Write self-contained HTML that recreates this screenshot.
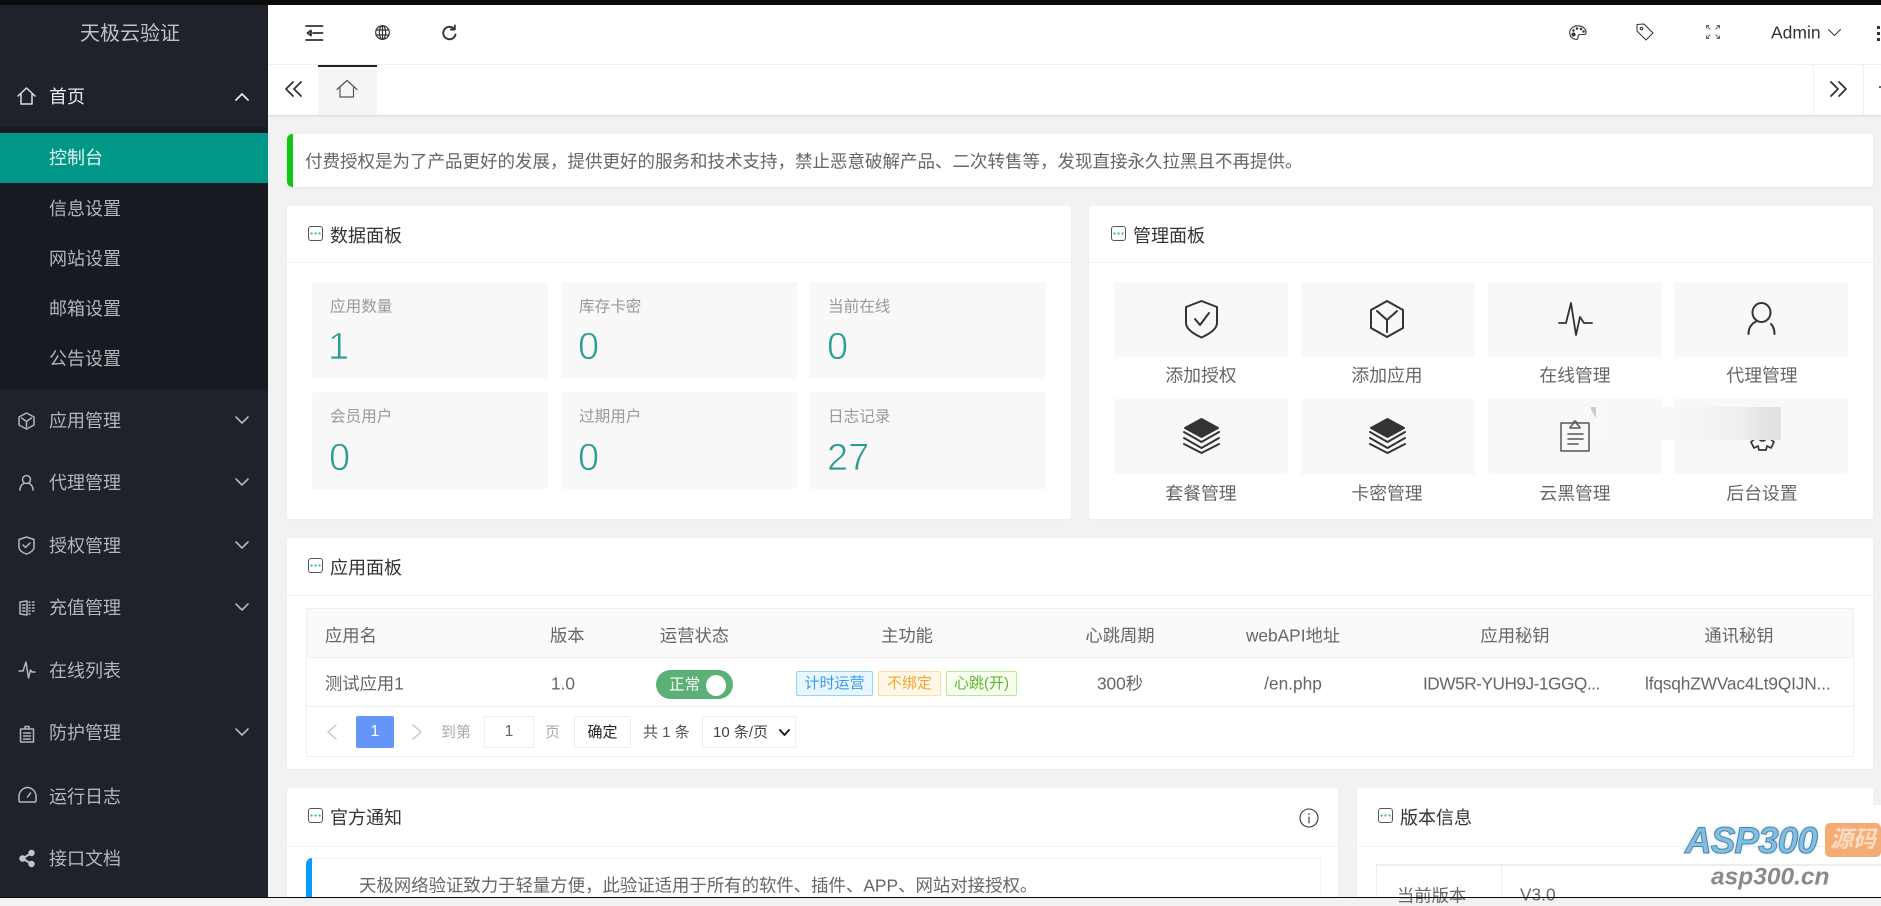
<!DOCTYPE html>
<html lang="zh"><head><meta charset="utf-8"><title>天极云验证</title>
<style>
html,body{margin:0;padding:0;width:1881px;height:898px;overflow:hidden;background:#f2f2f2;font-family:"Liberation Sans","Noto Sans CJK SC",sans-serif;}
div,span,svg{position:absolute;box-sizing:border-box}
.t{white-space:nowrap;transform:translateY(calc(-50% + var(--s,0px)));line-height:1.2}
.c{white-space:nowrap;transform:translate(-50%,calc(-50% + var(--s,0px)));line-height:1.2}
.card{background:#fff;border-radius:3px;box-shadow:0 1px 2px rgba(0,0,0,.04)}
.side{color:#b4b6ba;font-size:18px;left:49px;--s:2px}
.hl{height:1px;background:#f3f3f3}
.ttl{font-size:18px;color:#333;--s:2px}
.box{background:#f8f8f8;border-radius:2px}
.lab{font-size:15.6px;color:#999;--s:3px}
.val{font-size:38px;color:#2a9d90;-webkit-text-stroke:.8px #f8f8f8}
.tile{background:#f8f8f8;border-radius:2px;width:174px;height:75px}
.tl{font-size:17.8px;color:#666;--s:1px}
.th{font-size:17.3px;color:#666;--s:1px}
svg{fill:none;stroke:#333;stroke-width:1.5;stroke-linecap:round;stroke-linejoin:round;overflow:visible}
.ic{stroke:#b4b6ba}
.badge{top:671px;height:25px;border-radius:2px;border:1px solid;font-size:15px;text-align:center;line-height:23px;white-space:nowrap}
</style></head><body>

<!-- sidebar -->
<div style="left:0;top:0;width:268px;height:898px;background:#1f222b"></div>
<div style="left:0;top:127px;width:268px;height:263px;background:#181a21"></div>
<div style="left:0;top:133px;width:268px;height:50px;background:#009688"></div>
<div class="c" style="left:130px;top:33px;font-size:20px;color:#c2c2c2;--s:1px">天极云验证</div>
<div class="t side" style="top:96px;color:#e8e8e8">首页</div>
<div class="t side" style="top:157px;color:#e8f5f3">控制台</div>
<div class="t side" style="top:208px">信息设置</div>
<div class="t side" style="top:258px">网站设置</div>
<div class="t side" style="top:308px">邮箱设置</div>
<div class="t side" style="top:358px">公告设置</div>
<div class="t side" style="top:420px">应用管理</div>
<div class="t side" style="top:482px">代理管理</div>
<div class="t side" style="top:544.500px">授权管理</div>
<div class="t side" style="top:606.500px">充值管理</div>
<div class="t side" style="top:670px">在线列表</div>
<div class="t side" style="top:731.500px">防护管理</div>
<div class="t side" style="top:796px">运行日志</div>
<div class="t side" style="top:857.500px">接口文档</div>
<!-- side icons -->
<svg class="ic" style="left:17px;top:87px;stroke:#e0e0e0" width="19" height="18" viewBox="0 0 19 18"><path d="M1 9L9.5 1 18 9M4 7.5V17H15V7.5"/></svg>
<svg class="ic" style="left:18px;top:412px" width="17" height="18" viewBox="0 0 17 18"><path d="M8.500 1L16 5V13L8.500 17 1 13V5ZM3.500 6L8.500 9.500 13.500 6M8.500 9.500V15"/></svg>
<svg class="ic" style="left:19px;top:474px" width="15" height="17" viewBox="0 0 15 17"><circle cx="7.500" cy="5.500" r="4"/><path d="M1 16C1 12 3 10.500 4.500 9.500M14 16C14 12 12 10.500 10.500 9.500"/></svg>
<svg class="ic" style="left:18px;top:536px" width="17" height="19" viewBox="0 0 17 19"><path d="M8.500 1L16 3.500V11C16 14.500 12 17 8.500 18 5 17 1 14.500 1 11V3.500ZM5 9L7.500 11.500 12 7"/></svg>
<svg class="ic" style="left:19px;top:600px" width="16" height="16" viewBox="0 0 16 16"><path d="M1 2L8 1V15L1 14ZM3.500 5H6M3.500 8H6M3.500 11H6M10 2H11M10 5H11M10 8H11M10 11H11M10 14H11M13.500 2H15M13.500 5H15M13.500 8H15M13.500 11H15"/></svg>
<svg class="ic" style="left:18px;top:660px" width="18" height="20" viewBox="0 0 18 20"><path d="M1 11H5L8 2 10.500 18 12.500 10 14 12H17"/></svg>
<svg class="ic" style="left:19px;top:725px" width="16" height="18" viewBox="0 0 16 18"><path d="M1.500 4H14.500V17H1.500ZM6 4V1.500H10V4M4.500 8H11.500M4.500 11H11.500M4.500 14H11.500"/></svg>
<svg class="ic" style="left:18px;top:786px" width="19" height="17" viewBox="0 0 19 17"><path d="M1.500 16C.5 14 1 12 1 10.500 1 5.500 5 1.500 9.500 1.500S18 5.500 18 10.500C18 12 18.500 14 17.500 16ZM12.500 7L9.500 11"/></svg>
<svg style="left:19px;top:850px;stroke:#c4c4c4;fill:#c4c4c4" width="16" height="17" viewBox="0 0 16 17"><circle cx="3.500" cy="8.500" r="2.500"/><circle cx="12.500" cy="3" r="2.500"/><circle cx="12.500" cy="14" r="2.500"/><path d="M3.500 8.500L12.500 3M3.500 8.500L12.500 14" stroke-width="2"/></svg>
<!-- chevrons -->
<svg style="left:235px;top:93px;stroke:#e8e8e8;stroke-width:1.800" width="14" height="8" viewBox="0 0 14 8"><path d="M1 7L7 1 13 7"/></svg>
<svg class="ic" style="left:235px;top:416px;stroke-width:1.600" width="14" height="8" viewBox="0 0 14 8"><path d="M1 1L7 7 13 1"/></svg>
<svg class="ic" style="left:235px;top:478px;stroke-width:1.600" width="14" height="8" viewBox="0 0 14 8"><path d="M1 1L7 7 13 1"/></svg>
<svg class="ic" style="left:235px;top:541px;stroke-width:1.600" width="14" height="8" viewBox="0 0 14 8"><path d="M1 1L7 7 13 1"/></svg>
<svg class="ic" style="left:235px;top:603px;stroke-width:1.600" width="14" height="8" viewBox="0 0 14 8"><path d="M1 1L7 7 13 1"/></svg>
<svg class="ic" style="left:235px;top:728px;stroke-width:1.600" width="14" height="8" viewBox="0 0 14 8"><path d="M1 1L7 7 13 1"/></svg>

<!-- header -->
<div style="left:268px;top:5px;width:1613px;height:60px;background:#fff;border-bottom:1px solid #f1f1f1"></div>
<svg style="left:306px;top:25px;stroke-width:1.800" width="17" height="16" viewBox="0 0 17 16"><path d="M0 1H16.500M0 15H16.500M7 8H16.500M5 5.500L1.500 8 5 10.500Z"/></svg>
<svg style="left:375px;top:25px;stroke-width:1.200" width="15" height="15" viewBox="0 0 15 15"><circle cx="7.500" cy="7.500" r="6.800"/><ellipse cx="7.500" cy="7.500" rx="3.200" ry="6.800"/><path d="M1 5H14M1 10H14M7.500 .7V14.300"/></svg>
<svg style="left:442px;top:25px;stroke-width:1.900" width="15" height="16" viewBox="0 0 15 16"><path d="M13.500 9.500A6.200 6.200 0 1 1 12 3.800M12.800 .5V4.500H8.800"/></svg>
<!-- tabs -->
<div style="left:268px;top:65px;width:1613px;height:50px;background:#fff;box-shadow:0 1px 2px rgba(0,0,0,.12)"></div>
<div style="left:318px;top:65px;width:59px;height:50px;background:#f5f5f5;border-top:2px solid #1f222b"></div>
<svg style="left:285px;top:81px;stroke-width:1.800" width="17" height="16" viewBox="0 0 17 16"><path d="M8 1L1 8 8 15M16 1L9 8 16 15"/></svg>
<svg style="left:337px;top:80px;stroke:#555;stroke-width:1.200" width="20" height="18" viewBox="0 0 20 18"><path d="M0 9.500L10 .5 20 9.500M3 7.500V17H16.500V7.500"/></svg>
<div style="left:1813px;top:65px;width:1px;height:50px;background:#f1f1f1"></div>
<div style="left:1863px;top:65px;width:1px;height:50px;background:#f1f1f1"></div>
<svg style="left:1830px;top:81px;stroke-width:1.800" width="17" height="16" viewBox="0 0 17 16"><path d="M1 1L8 8 1 15M9 1L16 8 9 15"/></svg>
<div style="left:1879px;top:86px;width:2px;height:1.500px;background:#666"></div>
<!-- right header icons -->
<svg style="left:1569px;top:25px;stroke-width:1.100" width="18" height="15" viewBox="0 0 18 15"><path d="M9 .8C4 .8 .7 4 .7 7.800S3.500 14.300 7.500 14.300C9.500 14.300 9 12.500 9 11.500 9 10 10.500 9.500 12 9.500H15C17 9.500 17.300 8 17 6.500 16 3 13 .8 9 .8Z"/><circle cx="4.500" cy="9.500" r="1.500" fill="#333"/><circle cx="4.500" cy="5.500" r=".7" fill="#333"/><circle cx="8" cy="3.500" r=".7" fill="#333"/><circle cx="12" cy="4" r=".7" fill="#333"/><circle cx="14.500" cy="6.500" r=".7" fill="#333"/></svg>
<svg style="left:1636px;top:23px;stroke-width:1" width="18" height="18" viewBox="0 0 18 18"><path d="M1 1.500L8 1 17 10 10 17 1 8Z"/><circle cx="5.500" cy="5.500" r="1.300"/></svg>
<svg style="left:1706px;top:25px;stroke-width:.9;stroke:#555" width="14" height="14" viewBox="0 0 14 14"><path d="M.5 3V.5H3M.5 .5L4 4M13.500 3V.5H11M13.500 .5L10 4M.5 11V13.500H3M.5 13.500L4 10M13.500 11V13.500H11M13.500 13.500L10 10"/></svg>
<div class="t" style="left:1771px;top:33px;font-size:17.500px;color:#333">Admin</div>
<svg style="left:1828px;top:29px;stroke-width:1" width="13" height="7" viewBox="0 0 13 7"><path d="M.5 .5L6.500 6.500 12.500 .5"/></svg>
<div style="left:1877px;top:26px;width:3px;height:3px;background:#333"></div>
<div style="left:1877px;top:32px;width:3px;height:3px;background:#333"></div>
<div style="left:1877px;top:38px;width:3px;height:3px;background:#333"></div>

<!-- notice -->
<div class="card" style="left:287px;top:134px;width:1586px;height:53px;box-shadow:0 1px 3px rgba(0,0,0,.07)"></div>
<div style="left:287px;top:134px;width:6px;height:53px;background:#10c610;border-radius:5px 0 0 5px"></div>
<div class="t" style="left:305px;top:161px;font-size:17.500px;color:#666;--s:1px">付费授权是为了产品更好的发展，提供更好的服务和技术支持，禁止恶意破解产品、二次转售等，发现直接永久拉黑且不再提供。</div>

<!-- data panel -->
<div class="card" style="left:287px;top:206px;width:784px;height:313px"></div>
<div class="hl" style="left:287px;top:262px;width:784px"></div>
<svg style="left:308px;top:226px;stroke-width:1" width="15" height="15" viewBox="0 0 15 15"><rect x=".5" y=".5" width="14" height="14" rx="2.500" stroke="#555"/><path d="M3.500 7.500H3.600M7.500 7.500H7.600M11.500 7.500H11.600" stroke="#3bb8b0" stroke-width="2.200"/></svg>
<div class="t ttl" style="left:330px;top:235px">数据面板</div>
<div class="box" style="left:312px;top:282px;width:236px;height:97px"></div>
<div class="box" style="left:561px;top:282px;width:236px;height:97px"></div>
<div class="box" style="left:809px;top:282px;width:237px;height:97px"></div>
<div class="box" style="left:312px;top:392px;width:236px;height:97px"></div>
<div class="box" style="left:561px;top:392px;width:236px;height:97px"></div>
<div class="box" style="left:809px;top:392px;width:237px;height:97px"></div>
<div class="t lab" style="left:330px;top:304.500px">应用数量</div>
<div class="t lab" style="left:579px;top:304.500px">库存卡密</div>
<div class="t lab" style="left:828px;top:304.500px">当前在线</div>
<div class="t lab" style="left:330px;top:414.500px">会员用户</div>
<div class="t lab" style="left:579px;top:414.500px">过期用户</div>
<div class="t lab" style="left:828px;top:414.500px">日志记录</div>
<div class="t val" style="left:328px;top:348px">1</div>
<div class="t val" style="left:578px;top:348px">0</div>
<div class="t val" style="left:827px;top:348px">0</div>
<div class="t val" style="left:329px;top:458.500px">0</div>
<div class="t val" style="left:578px;top:458.500px">0</div>
<div class="t val" style="left:827px;top:458.500px">27</div>

<!-- manage panel -->
<div class="card" style="left:1089px;top:206px;width:784px;height:313px"></div>
<div class="hl" style="left:1089px;top:262px;width:784px"></div>
<svg style="left:1111px;top:226px;stroke-width:1" width="15" height="15" viewBox="0 0 15 15"><rect x=".5" y=".5" width="14" height="14" rx="2.500" stroke="#555"/><path d="M3.500 7.500H3.600M7.500 7.500H7.600M11.500 7.500H11.600" stroke="#3bb8b0" stroke-width="2.200"/></svg>
<div class="t ttl" style="left:1133px;top:235px">管理面板</div>
<div class="tile" style="left:1114px;top:282px"></div>
<div class="tile" style="left:1301px;top:282px"></div>
<div class="tile" style="left:1488px;top:282px"></div>
<div class="tile" style="left:1674px;top:282px"></div>
<div class="tile" style="left:1114px;top:399px"></div>
<div class="tile" style="left:1301px;top:399px"></div>
<div class="tile" style="left:1488px;top:399px"></div>
<div class="tile" style="left:1674px;top:399px"></div>
<div class="c tl" style="left:1201px;top:375px">添加授权</div>
<div class="c tl" style="left:1387px;top:375px">添加应用</div>
<div class="c tl" style="left:1575px;top:375px">在线管理</div>
<div class="c tl" style="left:1762px;top:375px">代理管理</div>
<div class="c tl" style="left:1201px;top:493px">套餐管理</div>
<div class="c tl" style="left:1387px;top:493px">卡密管理</div>
<div class="c tl" style="left:1575px;top:493px">云黑管理</div>
<div class="c tl" style="left:1762px;top:493px">后台设置</div>
<svg style="left:1185px;top:300px;stroke-width:2" width="33" height="38" viewBox="0 0 33 38"><path d="M16.500 1L32 7V23C32 30 22 35 16.500 37.500 11 35 1 30 1 23V7ZM10 19L15 25 24 13"/></svg>
<svg style="left:1370px;top:300px;stroke-width:2" width="34" height="38" viewBox="0 0 34 38"><path d="M17 1L33 10V28L17 37 1 28V10ZM7 11L17 20 27 11M17 20V32"/></svg>
<svg style="left:1558px;top:302px;stroke-width:1.800" width="35" height="34" viewBox="0 0 35 34"><path d="M1 21H8L13 1 18 33 22 15 26 21H34"/></svg>
<svg style="left:1747px;top:302px;stroke-width:2" width="29" height="33" viewBox="0 0 29 33"><ellipse cx="14.500" cy="10.500" rx="9" ry="9.500"/><path d="M1.500 32C1.500 26 4 22 9 19.500M27.500 32C27.500 28 26.500 24.500 24 22"/></svg>
<svg style="left:1183px;top:418px;stroke-width:2" width="37" height="36" viewBox="0 0 37 36"><path d="M18.500 1L35 10 18.500 19 2 10Z" fill="#333"/><path d="M1 14L18.500 24 36 14M1 20L18.500 30 36 20M1 26L18.500 35 36 26"/></svg>
<svg style="left:1369px;top:418px;stroke-width:2" width="37" height="36" viewBox="0 0 37 36"><path d="M18.500 1L35 10 18.500 19 2 10Z" fill="#333"/><path d="M1 14L18.500 24 36 14M1 20L18.500 30 36 20M1 26L18.500 35 36 26"/></svg>
<svg style="left:1560px;top:419px;stroke-width:1.500;stroke:#555" width="30" height="33" viewBox="0 0 30 33"><path d="M1 4H29V32H1ZM10 9C10 7 12 7 13 5 14 1 16 1 17 5 18 7 20 7 20 9ZM8 15H23M8 20H23M8 25H18"/></svg>
<svg style="left:1750px;top:421px;stroke-width:1.700" width="25" height="31" viewBox="0 0 25 31"><path d="M9 2H16L17 7 21 5 24 11 20.500 14 20.500 18 24 21 21 27 17 25 16 29H9L8 25 4 27 1 21 4.500 18 4.500 14 1 11 4 5 8 7Z"/><circle cx="12.500" cy="16" r="4"/></svg>
<!-- blurred patch -->
<div style="left:1596px;top:407px;width:185px;height:33px;background:linear-gradient(90deg,#f9f9f9 0%,#f5f5f5 50%,#efefef 78%,#e6e6e6 88%,#e0e0e0 100%)"></div>
<div style="left:1591px;top:407px;width:5px;height:14px;background:linear-gradient(60deg,#f8f8f8 50%,#ccc 50%)"></div>

<!-- app panel -->
<div class="card" style="left:287px;top:538px;width:1586px;height:231px"></div>
<div class="hl" style="left:287px;top:595px;width:1586px"></div>
<svg style="left:308px;top:558px;stroke-width:1" width="15" height="15" viewBox="0 0 15 15"><rect x=".5" y=".5" width="14" height="14" rx="2.500" stroke="#555"/><path d="M3.500 7.500H3.600M7.500 7.500H7.600M11.500 7.500H11.600" stroke="#3bb8b0" stroke-width="2.200"/></svg>
<div class="t ttl" style="left:330px;top:567px">应用面板</div>
<div style="left:306px;top:608px;width:1548px;height:149px;border:1px solid #eee"></div>
<div style="left:307px;top:609px;width:1546px;height:48px;background:#fafafa"></div>
<div class="hl" style="left:307px;top:657px;width:1546px;background:#eee"></div>
<div class="hl" style="left:307px;top:706px;width:1546px;background:#eee"></div>
<div class="t th" style="left:325px;top:635px">应用名</div>
<div class="t th" style="left:550px;top:635px">版本</div>
<div class="c th" style="left:694.500px;top:635px">运营状态</div>
<div class="c th" style="left:907px;top:635px">主功能</div>
<div class="c th" style="left:1120px;top:635px">心跳周期</div>
<div class="c th" style="left:1293px;top:635px">webAPI地址</div>
<div class="c th" style="left:1515px;top:635px">应用秘钥</div>
<div class="c th" style="left:1739px;top:635px">通讯秘钥</div>
<div class="t th" style="left:325px;top:683px">测试应用1</div>
<div class="t th" style="left:551px;top:683px">1.0</div>
<div style="left:656px;top:670px;width:77px;height:29px;border-radius:15px;background:#5bb075"></div>
<div class="t" style="left:669px;top:686px;font-size:15.600px;color:#fff">正常</div>
<div style="left:706px;top:674.500px;width:20px;height:21px;border-radius:50%;background:#fff"></div>
<div class="badge" style="left:796px;width:77px;background:#e8f7ff;border-color:#91d5ff;color:#3a9ae8">计时运营</div>
<div class="badge" style="left:878px;width:63px;background:#fff8e8;border-color:#ffe09a;color:#f2a62e">不绑定</div>
<div class="badge" style="left:946px;width:71px;background:#f6ffed;border-color:#b7eb8f;color:#62b438">心跳(开)</div>
<div class="c th" style="left:1120px;top:683px">300秒</div>
<div class="c th" style="left:1293px;top:683px">/en.php</div>
<div class="t th" style="left:1423px;top:683px;letter-spacing:-.5px">IDW5R-YUH9J-1GGQ...</div>
<div class="t th" style="left:1645px;top:683px;letter-spacing:-.15px">lfqsqhZWVac4Lt9QIJN...</div>
<svg style="left:327px;top:724px;stroke:#ccc;stroke-width:1.500" width="10" height="16" viewBox="0 0 10 16"><path d="M9 1L1 8 9 15"/></svg>
<div style="left:356px;top:716px;width:38px;height:32px;background:#6496fa;border-radius:2px;color:#fff;font-size:15.600px;text-align:center;line-height:32px">1</div>
<svg style="left:412px;top:724px;stroke:#ccc;stroke-width:1.500" width="10" height="16" viewBox="0 0 10 16"><path d="M1 1L9 8 1 15"/></svg>
<div class="t" style="left:441px;top:733px;font-size:15px;color:#aaa">到第</div>
<div style="left:484px;top:716px;width:50px;height:32px;border:1px solid #eee;color:#666;font-size:15.600px;text-align:center;line-height:30px">1</div>
<div class="t" style="left:545px;top:733px;font-size:15px;color:#aaa">页</div>
<div style="left:574px;top:716px;width:57px;height:32px;border:1px solid #eee;color:#222;font-size:15px;text-align:center;line-height:31px">确定</div>
<div class="t" style="left:643px;top:733px;font-size:15px;color:#555">共 1 条</div>
<div style="left:702px;top:716px;width:94px;height:32px;border:1px solid #eee"></div>
<div class="t" style="left:713px;top:733px;font-size:15px;color:#444">10 条/页</div>
<svg style="left:779px;top:729px;stroke:#222;stroke-width:2" width="11" height="7" viewBox="0 0 11 7"><path d="M1 1L5.500 6 10 1"/></svg>

<!-- notice panel -->
<div class="card" style="left:287px;top:788px;width:1051px;height:110px"></div>
<div class="hl" style="left:287px;top:846px;width:1051px"></div>
<svg style="left:308px;top:808px;stroke-width:1" width="15" height="15" viewBox="0 0 15 15"><rect x=".5" y=".5" width="14" height="14" rx="2.500" stroke="#555"/><path d="M3.500 7.500H3.600M7.500 7.500H7.600M11.500 7.500H11.600" stroke="#3bb8b0" stroke-width="2.200"/></svg>
<div class="t ttl" style="left:330px;top:817px">官方通知</div>
<svg style="left:1299px;top:808px;stroke-width:1.100" width="20" height="20" viewBox="0 0 20 20"><circle cx="10" cy="10" r="9"/><path d="M10 9V15M10 5.500V6.500"/></svg>
<div style="left:306px;top:858px;width:1015px;height:40px;border-top:1px solid #f5f5f5;border-right:1px solid #f5f5f5"></div>
<div style="left:306px;top:858px;width:6px;height:40px;background:#0a9bff;border-radius:6px 0 0 0"></div>
<div class="t" style="left:359px;top:886px;font-size:17.400px;color:#666">天极网络验证致力于轻量方便，此验证适用于所有的软件、插件、APP、网站对接授权。</div>

<!-- version panel -->
<div class="card" style="left:1357px;top:788px;width:524px;height:110px"></div>
<div style="left:1873px;top:788px;width:8px;height:17px;background:#f2f2f2"></div>
<div class="hl" style="left:1357px;top:846px;width:524px"></div>
<svg style="left:1378px;top:808px;stroke-width:1" width="15" height="15" viewBox="0 0 15 15"><rect x=".5" y=".5" width="14" height="14" rx="2.500" stroke="#555"/><path d="M3.500 7.500H3.600M7.500 7.500H7.600M11.500 7.500H11.600" stroke="#3bb8b0" stroke-width="2.200"/></svg>
<div class="t ttl" style="left:1400px;top:817px">版本信息</div>
<div style="left:1376px;top:864px;width:505px;height:2px;background:#eee"></div>
<div style="left:1376px;top:864px;width:1px;height:34px;background:#eee"></div>
<div style="left:1501px;top:864px;width:1px;height:34px;background:#eee"></div>
<div class="t" style="left:1397px;top:896px;font-size:17.300px;color:#666">当前版本</div>
<div class="t" style="left:1520px;top:895px;font-size:17.300px;color:#666">V3.0</div>

<!-- watermark -->
<div class="t" style="left:1685px;top:841px;font-size:37px;font-weight:bold;font-style:italic;color:#7cc0ea;letter-spacing:-1px;-webkit-text-stroke:1px #5b7f99;text-shadow:0 0 5px #bfe6ff">ASP300</div>
<div style="left:1825px;top:823px;width:56px;height:34px;background:#f4ab74;border-radius:5px"></div>
<div class="c" style="left:1853px;top:840px;font-size:23px;font-weight:bold;font-style:italic;color:#fbdcc4">源码</div>
<div class="t" style="left:1711px;top:877px;font-size:24.500px;font-weight:bold;font-style:italic;color:#8a8a8a">asp300.cn</div>

<!-- top / bottom black -->
<div style="left:0;top:0;width:1881px;height:5px;background:#0b0b0b"></div>
<div style="left:0;top:896.500px;width:1881px;height:1.500px;background:#0b0b0b"></div>
</body></html>
